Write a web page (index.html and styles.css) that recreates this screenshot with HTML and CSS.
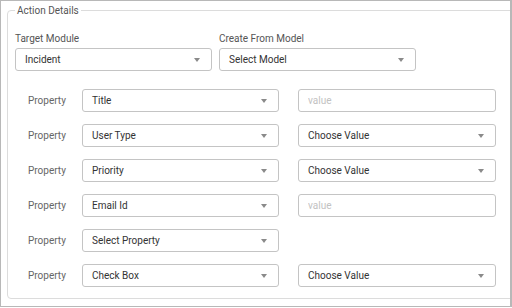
FILE: index.html
```html
<!DOCTYPE html>
<html>
<head>
  <meta charset="utf-8">
  <title>Action Details</title>
  <link rel="stylesheet" href="styles.css">
</head>
<body>
  <div class="frame">
    <fieldset class="details">
      <legend>Action Details</legend>

      <div class="top-row">
        <div class="field">
          <label>Target Module</label>
          <div class="select"><span>Incident</span><i class="caret"></i></div>
        </div>
        <div class="field">
          <label>Create From Model</label>
          <div class="select"><span>Select Model</span><i class="caret"></i></div>
        </div>
      </div>

      <div class="props">
        <div class="prop">
          <span class="prop-label">Property</span>
          <div class="select"><span>Title</span><i class="caret"></i></div>
          <input class="value" type="text" placeholder="value">
        </div>
        <div class="prop">
          <span class="prop-label">Property</span>
          <div class="select"><span>User Type</span><i class="caret"></i></div>
          <div class="select wide"><span>Choose Value</span><i class="caret"></i></div>
        </div>
        <div class="prop">
          <span class="prop-label">Property</span>
          <div class="select"><span>Priority</span><i class="caret"></i></div>
          <div class="select wide"><span>Choose Value</span><i class="caret"></i></div>
        </div>
        <div class="prop">
          <span class="prop-label">Property</span>
          <div class="select"><span>Email Id</span><i class="caret"></i></div>
          <input class="value" type="text" placeholder="value">
        </div>
        <div class="prop">
          <span class="prop-label">Property</span>
          <div class="select"><span>Select Property</span><i class="caret"></i></div>
        </div>
        <div class="prop">
          <span class="prop-label">Property</span>
          <div class="select"><span>Check Box</span><i class="caret"></i></div>
          <div class="select wide"><span>Choose Value</span><i class="caret"></i></div>
        </div>
      </div>
    </fieldset>
  </div>
</body>
</html>
```

FILE: styles.css
```css
body {
  margin: 0;
  font-family: Roboto, "Liberation Sans", Arial, sans-serif;
  font-size: 10px;
  color: #333;
}

.frame {
  width: 512px;
  height: 307px;
  box-sizing: border-box;
  border: 1px solid #b8b8b8;
  border-right-width: 2px;
  overflow: hidden;
}

.details {
  margin: 3px -12px 0 6px;
  padding: 15px 7px 11px;
  border: 1px solid #dcdcdc;
  border-radius: 4px;
}

.details legend {
  padding: 0 2px;
  line-height: 13px;
  color: #555;
}

.top-row {
  display: flex;
  gap: 7px;
}

.field label {
  display: block;
  line-height: 13px;
  margin-bottom: 3px;
  color: #555;
}

.select {
  width: 197px;
  height: 23px;
  box-sizing: border-box;
  border: 1px solid #c4c4c4;
  border-radius: 3px;
  padding: 0 11px 0 9px;
  display: flex;
  align-items: center;
  justify-content: space-between;
  color: #333;
}

.select.wide {
  width: 198px;
}

.caret {
  width: 0;
  height: 0;
  border-left: 3px solid transparent;
  border-right: 3px solid transparent;
  border-top: 4px solid #8a8a8a;
}

.props {
  margin-top: 18px;
  padding-left: 13px;
  display: flex;
  flex-direction: column;
  gap: 12px;
}

.prop {
  display: flex;
  align-items: center;
  gap: 19px;
}

.prop-label {
  width: 35px;
  color: #666;
}

.value {
  width: 198px;
  height: 23px;
  box-sizing: border-box;
  margin: 0;
  border: 1px solid #c4c4c4;
  border-radius: 3px;
  padding: 0 9px;
  font-family: inherit;
  font-size: 10px;
  color: #333;
}

.value::placeholder {
  color: #c2c2c2;
}
```
